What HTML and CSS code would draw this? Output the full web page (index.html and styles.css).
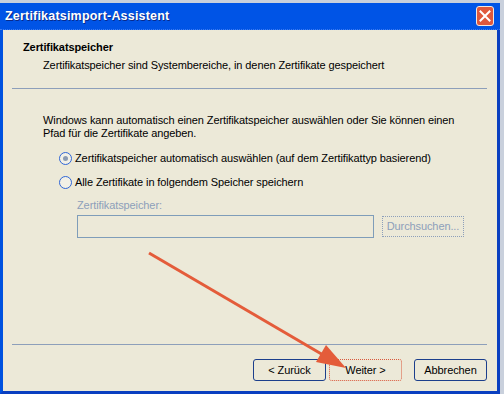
FILE: index.html
```html
<!DOCTYPE html>
<html lang="de">
<head>
    <meta charset="UTF-8">
    <title>Zertifikatsimport-Assistent</title>
    <link rel="stylesheet" href="styles.css">
</head>
<body>

<div class="window">
    <div class="titlebar">
        <span class="title">Zertifikatsimport-Assistent</span>
        <div class="close">
            <svg width="12" height="12" viewBox="0 0 12 12">
                <path d="M1.5 1.5 L10.5 10.5 M10.5 1.5 L1.5 10.5" stroke="#fff" stroke-width="2" stroke-linecap="square"/>
            </svg>
        </div>
    </div>

    <div class="header">
        <div class="heading">Zertifikatspeicher</div>
        <div class="subheading">Zertifikatspeicher sind Systembereiche, in denen Zertifikate gespeichert</div>
    </div>
    <div class="separator"></div>

    <div class="content">
        <p class="intro">Windows kann automatisch einen Zertifikatspeicher auswählen oder Sie können einen<br>Pfad für die Zertifikate angeben.</p>

        <div class="option">
            <span class="radio checked"></span>
            <span>Zertifikatspeicher automatisch auswählen (auf dem Zertifikattyp basierend)</span>
        </div>
        <div class="option">
            <span class="radio"></span>
            <span>Alle Zertifikate in folgendem Speicher speichern</span>
        </div>

        <div class="store">
            <div class="store-label">Zertifikatspeicher:</div>
            <div class="store-row">
                <div class="textbox"></div>
                <div class="browse">Durchsuchen...</div>
            </div>
        </div>
    </div>

    <div class="separator"></div>
    <div class="buttons">
        <div class="btn">&lt; Zurück</div>
        <div class="btn btn-next">Weiter &gt;</div>
        <div class="btn btn-cancel">Abbrechen</div>
    </div>
</div>

<!-- Markierung ueber dem Dialog -->
<svg class="arrow" width="504" height="394" viewBox="0 0 504 394">
    <line x1="149" y1="253" x2="330" y2="359" stroke="#e45c3a" stroke-width="3"/>
    <polygon points="346,368 316,362 326,345" fill="#e45c3a"/>
</svg>

</body>
</html>
```

FILE: styles.css
```css
body {
    margin: 0;
    background-color: #c9d0dc;
    font-family: "Liberation Sans", Arial, sans-serif;
    font-size: 11px;
    letter-spacing: -0.1px;
    color: #000;
    position: relative;
    width: 504px;
    height: 394px;
    overflow: hidden;
}

.window {
    margin-top: 3px;
    width: 500px;
    height: 391px;
    box-sizing: border-box;
    background-color: #ece9d8;
    border-left: 3px solid #0052e0;
    border-right: 3px solid #0a3fc0;
    border-bottom: 3px solid #0a3fc0;
    display: flex;
    flex-direction: column;
}

.titlebar {
    height: 27px;
    margin-left: -3px;
    margin-right: -3px;
    padding: 0 6px 0 5px;
    background-color: #0054e6;
    border-bottom: 1px dotted #3b7af0;
    box-sizing: border-box;
    display: flex;
    align-items: center;
    justify-content: space-between;
}

.title {
    color: #fff;
    font-family: "Liberation Sans", Arial, sans-serif;
    font-weight: bold;
    font-size: 12.5px;
    letter-spacing: 0.2px;
    text-shadow: 1px 1px 0 #0a2a8a;
}

.close {
    width: 18px;
    height: 20px;
    box-sizing: border-box;
    background-color: #e0583c;
    border: 1px solid #f4e8e0;
    border-radius: 3px;
    display: flex;
    align-items: center;
    justify-content: center;
}

.header {
    padding: 11px 0 0 20px;
    line-height: 13px;
}

.heading {
    font-weight: bold;
}

.subheading {
    margin-top: 5px;
    padding-left: 20px;
}

.separator {
    height: 1px;
    margin: 16px 10px 0 9px;
    background-color: #8d9fba;
}

.content {
    flex: 1;
    padding-left: 40px;
    line-height: 13px;
}

.intro {
    margin: 25px 0 0 0;
}

.option {
    display: flex;
    align-items: center;
    margin-top: 11px;
    margin-left: 16px;
    height: 13px;
}

.option:first-of-type {
    margin-top: 12px;
}

.radio {
    width: 13px;
    height: 13px;
    box-sizing: border-box;
    border: 1px solid #2f66d6;
    border-radius: 50%;
    background-color: #f2f0e6;
    margin-right: 3px;
    display: flex;
    align-items: center;
    justify-content: center;
}

.radio.checked::after {
    content: "";
    width: 5px;
    height: 5px;
    border-radius: 50%;
    background-color: #8a9bb4;
}

.store {
    margin: 10px 0 0 34px;
}

.store-label {
    color: #8d9fba;
}

.store-row {
    display: flex;
    margin-top: 3px;
}

.textbox {
    width: 297px;
    height: 23px;
    box-sizing: border-box;
    border: 1px solid #7f9db9;
}

.browse {
    width: 82px;
    height: 21px;
    margin: 1px 0 0 8px;
    box-sizing: border-box;
    border: 1px dotted #8d9fba;
    color: #8d9fba;
    display: flex;
    align-items: center;
    justify-content: center;
}

.buttons {
    display: flex;
    justify-content: flex-end;
    padding: 14px 10px 10px 0;
}

.btn {
    width: 73px;
    height: 22px;
    box-sizing: border-box;
    border: 1px solid #1c3f8c;
    border-radius: 3px;
    display: flex;
    align-items: center;
    justify-content: center;
}

.btn-next {
    margin-left: 3px;
    border: 1px dotted #d9583b;
}

.btn-cancel {
    margin-left: 12px;
}

.arrow {
    position: absolute;
    left: 0;
    top: 0;
}
```
